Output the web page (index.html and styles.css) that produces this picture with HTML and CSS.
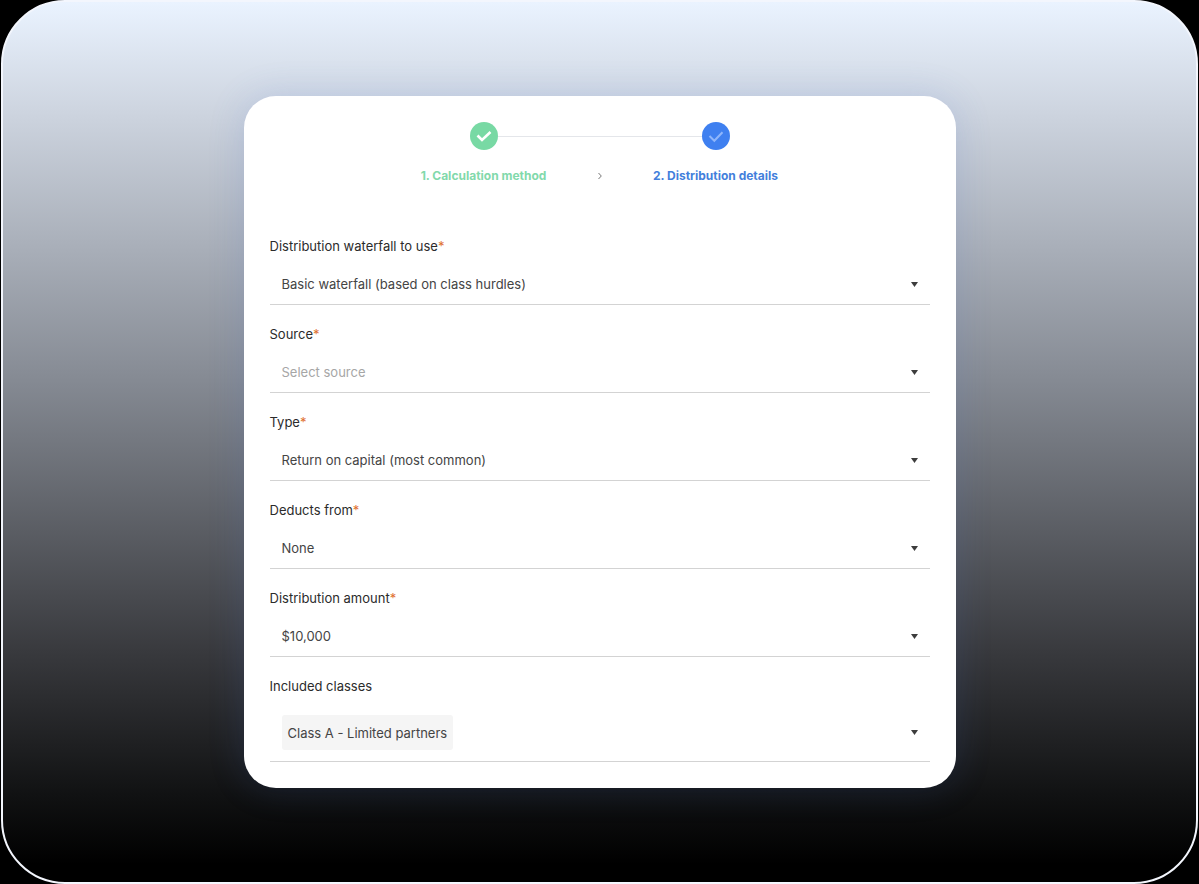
FILE: index.html
```html
<!DOCTYPE html>
<html lang="en">
<head>
    <meta charset="UTF-8">
    <meta name="viewport" content="width=device-width, initial-scale=1.0">
    <title>Distribution details</title>
    <link rel="stylesheet" href="styles.css">
</head>
<body>
    <div class="frame">
        <main class="card">
            <!-- Progress -->
            <div class="steps">
                <span class="steps-line"></span>
                <svg class="step-icon done" viewBox="0 0 28 28" aria-hidden="true">
                    <circle cx="14" cy="14" r="14"/>
                    <path d="M7.5 13.5l4.5 4.5 8.5-8"/>
                </svg>
                <svg class="step-icon current" viewBox="0 0 28 28" aria-hidden="true">
                    <circle cx="14" cy="14" r="14"/>
                    <path d="M7.5 14l4.8 4.8 8.2-8.6"/>
                </svg>
                <span class="step-label done">1. Calculation method</span>
                <svg class="step-arrow" viewBox="0 0 6 8" aria-hidden="true">
                    <path d="M1.5 1l2.8 3-2.8 3"/>
                </svg>
                <span class="step-label current">2. Distribution details</span>
            </div>

            <form class="fields">
                <div class="field">
                    <label for="waterfall">Distribution waterfall to use<span class="required">*</span></label>
                    <div class="control">
                        <select id="waterfall">
                            <option>Basic waterfall (based on class hurdles)</option>
                        </select>
                        <svg class="caret" viewBox="0 0 7 5" aria-hidden="true"><path d="M0 0h7L3.5 5z"/></svg>
                    </div>
                </div>
                <div class="field">
                    <label for="source">Source<span class="required">*</span></label>
                    <div class="control">
                        <select id="source" class="placeholder">
                            <option value="">Select source</option>
                        </select>
                        <svg class="caret" viewBox="0 0 7 5" aria-hidden="true"><path d="M0 0h7L3.5 5z"/></svg>
                    </div>
                </div>
                <div class="field">
                    <label for="type">Type<span class="required">*</span></label>
                    <div class="control">
                        <select id="type">
                            <option>Return on capital (most common)</option>
                        </select>
                        <svg class="caret" viewBox="0 0 7 5" aria-hidden="true"><path d="M0 0h7L3.5 5z"/></svg>
                    </div>
                </div>
                <div class="field">
                    <label for="deducts">Deducts from<span class="required">*</span></label>
                    <div class="control">
                        <select id="deducts">
                            <option>None</option>
                        </select>
                        <svg class="caret" viewBox="0 0 7 5" aria-hidden="true"><path d="M0 0h7L3.5 5z"/></svg>
                    </div>
                </div>
                <div class="field">
                    <label for="amount">Distribution amount<span class="required">*</span></label>
                    <div class="control">
                        <select id="amount">
                            <option>$10,000</option>
                        </select>
                        <svg class="caret" viewBox="0 0 7 5" aria-hidden="true"><path d="M0 0h7L3.5 5z"/></svg>
                    </div>
                </div>
                <div class="field">
                    <label for="classes">Included classes</label>
                    <div class="control">
                        <button type="button" id="classes" class="multi">
                            <span class="chip">Class A - Limited partners</span>
                        </button>
                        <svg class="caret" viewBox="0 0 7 5" aria-hidden="true"><path d="M0 0h7L3.5 5z"/></svg>
                    </div>
                </div>
            </form>
        </main>
    </div>
</body>
</html>
```
FILE: styles.css
```css
* {
    box-sizing: border-box;
}
body {
    margin: 0;
    padding: 0 1px;
    background: #000;
    font-family: Inter, "Open Sans", sans-serif;
    font-size: 13px;
    line-height: 18px;
    color: #2b2b2b;
}
.frame {
    display: flex;
    align-items: center;
    justify-content: center;
    min-height: 100vh;
    padding: 40px 20px;
    border: 2px solid #f3f6fd;
    border-radius: 64px;
    background: linear-gradient(#eaf3ff, #ccd3de 13%, #858a93 43%, #38393d 74%, #111213 90%, #000 98%);
}
.card {
    width: 100%;
    max-width: 712px;
    padding: 26px;
    border-radius: 32px;
    background: #fff;
    box-shadow: 0 0 36px rgba(70, 110, 200, 0.18);
}

/* Progress */
.steps {
    display: grid;
    grid-template-columns: 132px 100px 132px;
    justify-content: center;
    justify-items: center;
    align-items: center;
    row-gap: 17px;
    margin-bottom: 52px;
}
.steps-line {
    grid-area: 1 / 1 / 2 / 4;
    width: 204px;
    height: 1px;
    background: #e4e6ea;
}
.step-icon {
    grid-row: 1;
    width: 28px;
    height: 28px;
}
.step-icon.done {
    grid-column: 1;
    fill: #78d9a4;
}
.step-icon.current {
    grid-column: 3;
    fill: #3f80f0;
}
.step-icon path {
    fill: none;
    stroke: #fff;
    stroke-width: 2.6;
}
.step-icon.current path {
    stroke: #8fb6fb;
    stroke-width: 2;
}
.step-label {
    font-size: 12px;
    font-weight: 700;
    white-space: nowrap;
}
.step-label.done {
    color: #82d9ab;
}
.step-label.current {
    color: #437fdc;
}
.step-arrow {
    width: 6px;
    height: 8px;
    fill: none;
    stroke: #777;
}

/* Form */
.fields {
    display: grid;
    gap: 20px;
}
.field {
    display: grid;
    gap: 9px;
}
.required {
    color: #e0702f;
}
.control {
    display: grid;
    align-items: center;
    border-bottom: 1px solid #d3d3d3;
}
.control select,
.control .multi {
    grid-area: 1 / 1;
    width: 100%;
    height: 40px;
    margin: 0;
    padding: 0 30px 0 12px;
    border: none;
    background: none;
    appearance: none;
    font: inherit;
    color: #444;
    text-align: left;
    cursor: pointer;
}
.control select.placeholder {
    color: #a6a6a6;
}
.control .multi {
    height: auto;
    padding: 11px 30px 11px 12px;
}
.chip {
    display: inline-block;
    padding: 9px 6px 8px;
    border-radius: 3px;
    background: #f5f5f5;
    vertical-align: top;
}
.caret {
    grid-area: 1 / 1;
    justify-self: end;
    width: 7px;
    height: 5px;
    margin-right: 12px;
    fill: #3d3d3d;
    pointer-events: none;
}
```
